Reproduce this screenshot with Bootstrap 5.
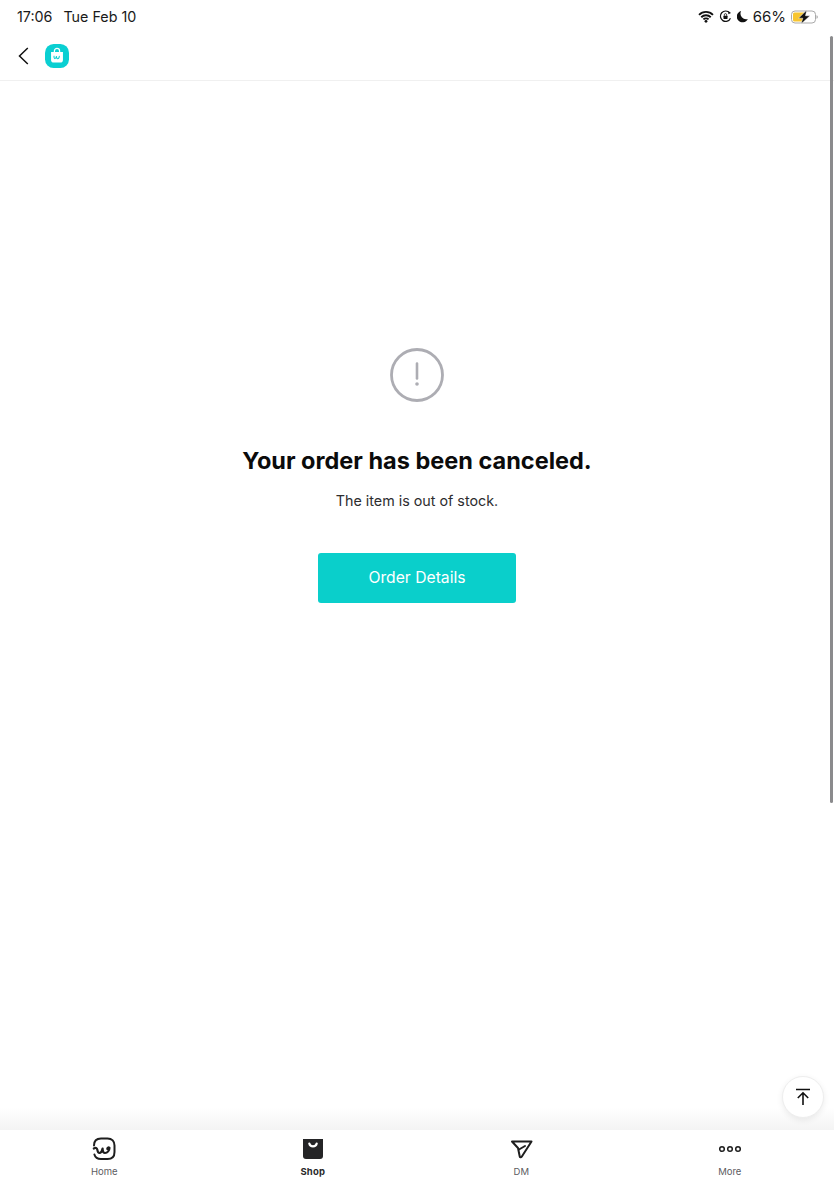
<!DOCTYPE html>
<html lang="en">

<head>
    <meta charset="UTF-8" />
    <title>Order canceled</title>
    <link href="https://cdn.jsdelivr.net/npm/bootstrap@5.3.3/dist/css/bootstrap.min.css" rel="stylesheet" />
    <style>
        html, body {
            height: 100%;
            overflow: hidden;
        }

        body {
            background: #fff;
            font-family: Inter, "Liberation Sans", sans-serif;
            color: #111;
        }

        .app-frame {
            height: 1200px;
            position: relative;
        }

        .status-bar {
            height: 35px;
            padding: 7px 16px 0 17px;
            font-size: 14.3px;
            line-height: 20px;
            color: #1a1a1a;
        }

        .status-left {
            gap: 11px;
        }

        .status-right {
            gap: 5px;
        }

        .status-right svg {
            margin-top: 3px;
        }

        .status-pct {
            font-size: 15px;
        }

        .top-bar {
            height: 46px;
            padding: 0 0 3px 18px;
            border-bottom: 1px solid #f0f0f0;
            gap: 16px;
        }

        .main-area {
            height: 1049px;
            padding-top: 266px;
        }

        .alert-mark {
            display: block;
            margin-bottom: 41px;
        }

        .main-title {
            font-size: 23.5px;
            line-height: 34px;
            font-weight: 700;
            color: #0b0b0b;
            margin: 0 0 11px;
        }

        .main-sub {
            font-size: 14.3px;
            line-height: 24px;
            color: #2d2d2f;
            margin: 0 0 40px;
        }

        .btn-details {
            width: 198px;
            height: 50px;
            padding: 0;
            background: #0acfcb;
            border: 0;
            border-radius: 3px;
            color: #fff;
            font-size: 15.7px;
        }

        .btn-details:hover {
            background: #0acfcb;
            color: #fff;
        }

        .tab-bar {
            height: 70px;
            background: #fff;
            position: relative;
        }

        .tab-bar::before {
            content: "";
            position: absolute;
            left: 0;
            right: 0;
            top: -22px;
            height: 22px;
            background: linear-gradient(to bottom, rgba(240, 240, 240, 0), rgba(240, 240, 240, 0.75));
        }

        .tab-item {
            flex: 1 1 0;
            padding-top: 7px;
            font-size: 9.5px;
            line-height: 14px;
            color: #5c5c5f;
        }

        .tab-item svg {
            display: block;
            margin-bottom: 4px;
        }

        .tab-active {
            color: #2a2a2c;
            font-weight: 700;
            letter-spacing: 0.2px;
        }

        .scroll-thumb {
            position: absolute;
            top: 36px;
            right: 1px;
            width: 3px;
            height: 767px;
            background: #8b8b8d;
            border-radius: 2px;
        }

        .to-top {
            position: absolute;
            left: 782px;
            top: 1076px;
            width: 42px;
            height: 42px;
            background: #fff;
            border: 1px solid #eee;
            border-radius: 50%;
            box-shadow: 0 2px 6px rgba(0, 0, 0, 0.08);
        }
    </style>
</head>

<body>
    <div class="app-frame d-flex flex-column">

        <!-- status bar -->
        <div class="status-bar d-flex justify-content-between flex-shrink-0">
            <div class="status-left d-flex">
                <span>17:06</span>
                <span>Tue Feb 10</span>
            </div>
            <div class="status-right d-flex align-items-start">
                <svg width="16" height="13" viewBox="0 0 17 14" aria-hidden="true">
                    <path d="M1 5.2a10.6 10.6 0 0 1 15 0M3.4 7.8a7.2 7.2 0 0 1 10.2 0M5.7 10.2a3.9 3.9 0 0 1 5.6 0" fill="none" stroke="#111" stroke-width="2" />
                    <circle cx="8.5" cy="12.2" r="1.5" fill="#111" />
                </svg>
                <svg width="13" height="13" viewBox="0 0 14 14" aria-hidden="true">
                    <path d="M12.3 8.8A5.6 5.6 0 1 1 11.5 3.2" fill="none" stroke="#111" stroke-width="1.3" />
                    <path d="M10 1.4l3 1.8-3 1.4z" fill="#111" />
                    <rect x="4.8" y="6.2" width="4.4" height="3.4" rx=".5" fill="#111" />
                    <path d="M5.7 6.3V5.2a1.3 1.3 0 0 1 2.6 0v1.1" fill="none" stroke="#111" stroke-width=".9" />
                </svg>
                <svg width="11" height="13" viewBox="0 0 12 14" aria-hidden="true">
                    <path d="M4.5 1a6.2 6.2 0 0 0 7.3 8.7A6.3 6.3 0 1 1 4.500 1z" fill="#111" />
                </svg>
                <span class="status-pct">66%</span>
                <svg width="27" height="14" viewBox="0 0 27 14" aria-hidden="true">
                    <rect x=".5" y="1" width="24" height="12" rx="3.5" fill="none" stroke="#a9a9a9" />
                    <path d="M2 4A1.5 1.5 0 0 1 3.5 2.500H13v9H3.500A1.5 1.5 0 0 1 2 10z" fill="#f7c531" />
                    <path d="M25.5 5.200c1 .3 1.300 1 1.300 1.800s-.3 1.500-1.300 1.800z" fill="#a9a9a9" />
                    <path d="M15.800 0L7.500 8.200h4.300L10 14l9-8.200h-4.500z" fill="#111" stroke="#fff" stroke-width=".5" />
                </svg>
            </div>
        </div>

        <!-- top bar -->
        <div class="top-bar d-flex align-items-center flex-shrink-0">
            <svg width="11" height="18" viewBox="0 0 11 18" aria-hidden="true">
                <path d="M9.800 1L1.500 9l8.300 8" fill="none" stroke="#111" stroke-width="1.500" />
            </svg>
            <svg width="24" height="24" viewBox="0 0 25 25" aria-hidden="true">
                <rect width="25" height="25" rx="9" fill="#0acfd2" />
                <path d="M6.300 8.400h12.400v8a3 3 0 0 1-3 3H9.300a3 3 0 0 1-3-3z" fill="#fff" />
                <path d="M9.800 8.400V7.200a2.700 2.700 0 0 1 5.400 0v1.200" fill="none" stroke="#fff" stroke-width="1.300" />
                <path d="M9.400 12.300c-.1 1.800.2 3 1 3s1.200-1.200 1.600-2.600c0 1.600.4 2.600 1.100 2.600 1 0 2-1.300 1.800-2.900" fill="none" stroke="#0acfd2" stroke-width="1.100" />
            </svg>
        </div>

        <!-- main message -->
        <div class="main-area d-flex flex-column align-items-center text-center flex-shrink-0">
            <svg class="alert-mark" width="56" height="56" viewBox="0 0 56 56" aria-hidden="true">
                <circle cx="28" cy="28" r="25.500" fill="none" stroke="#adadb3" stroke-width="2.800" />
                <path d="M28 16.500v15" fill="none" stroke="#adadb3" stroke-width="2.600" stroke-linecap="round" />
                <circle cx="28" cy="37" r="1.800" fill="#adadb3" />
            </svg>
            <h1 class="main-title">Your order has been canceled.</h1>
            <p class="main-sub">The item is out of stock.</p>
            <a class="btn btn-details d-flex align-items-center justify-content-center" href="#">Order Details</a>
        </div>

        <!-- bottom tabs -->
        <div class="tab-bar d-flex flex-shrink-0">
            <div class="tab-item d-flex flex-column align-items-center">
                <svg width="24" height="24" viewBox="0 0 24 24" aria-hidden="true">
                    <path d="M2 8.500C2 4 4.500 1.500 9 1.500h6.500c4.500 0 7 3 7 7v6.500c0 4.500-2.500 7-7 7H9c-3.500 0-5.800-1.700-6.600-4.500" fill="none" stroke="#1e1e1e" stroke-width="2" stroke-linecap="round" />
                    <path d="M1.800 11.500c2-1 3.200-.6 3.500 1.200.3 2.200 1 3.300 2.200 3.300 1.600 0 2.500-1.800 3.100-4.400.1 2.600.9 4.400 2.400 4.400 2.400 0 4.500-2.600 4.500-5.200-1.100-.8-2.300 0-2.200 1.200" fill="none" stroke="#1e1e1e" stroke-width="2.200" stroke-linecap="round" stroke-linejoin="round" />
                </svg>
                <span>Home</span>
            </div>
            <div class="tab-item tab-active d-flex flex-column align-items-center">
                <svg width="24" height="24" viewBox="0 0 24 24" aria-hidden="true">
                    <path d="M2 2h20v17a3 3 0 0 1-3 3H5a3 3 0 0 1-3-3z" fill="#242426" />
                    <path d="M8.300 6.500a3.800 3.800 0 0 0 7.400 0" fill="none" stroke="#fff" stroke-width="2.200" stroke-linecap="round" />
                </svg>
                <span>Shop</span>
            </div>
            <div class="tab-item d-flex flex-column align-items-center">
                <svg width="24" height="24" viewBox="0 0 24 24" aria-hidden="true">
                    <path d="M3 4.500h19.500L12.700 19.700c-.7 1-1.900.7-2-.4L9 11z" fill="none" stroke="#1e1e1e" stroke-width="2" stroke-linejoin="round" />
                    <path d="M10 12.500l6-3.500" fill="none" stroke="#1e1e1e" stroke-width="2" stroke-linecap="round" />
                </svg>
                <span>DM</span>
            </div>
            <div class="tab-item d-flex flex-column align-items-center">
                <svg width="24" height="24" viewBox="0 0 24 24" aria-hidden="true">
                    <circle cx="4" cy="12" r="2.300" fill="none" stroke="#1e1e1e" stroke-width="1.500" />
                    <circle cx="12" cy="12" r="2.300" fill="none" stroke="#1e1e1e" stroke-width="1.500" />
                    <circle cx="20" cy="12" r="2.300" fill="none" stroke="#1e1e1e" stroke-width="1.500" />
                </svg>
                <span>More</span>
            </div>
        </div>

        <div class="scroll-thumb"></div>

        <div class="to-top d-flex align-items-center justify-content-center">
            <svg width="16" height="18" viewBox="0 0 16 18" aria-hidden="true">
                <path d="M1 1.500h14M8 17V5M2.800 10L8 4.800 13.200 10" fill="none" stroke="#111" stroke-width="1.600" />
            </svg>
        </div>
    </div>

    <script src="https://cdn.jsdelivr.net/npm/bootstrap@5.3.3/dist/js/bootstrap.bundle.min.js"></script>
</body>

</html>
